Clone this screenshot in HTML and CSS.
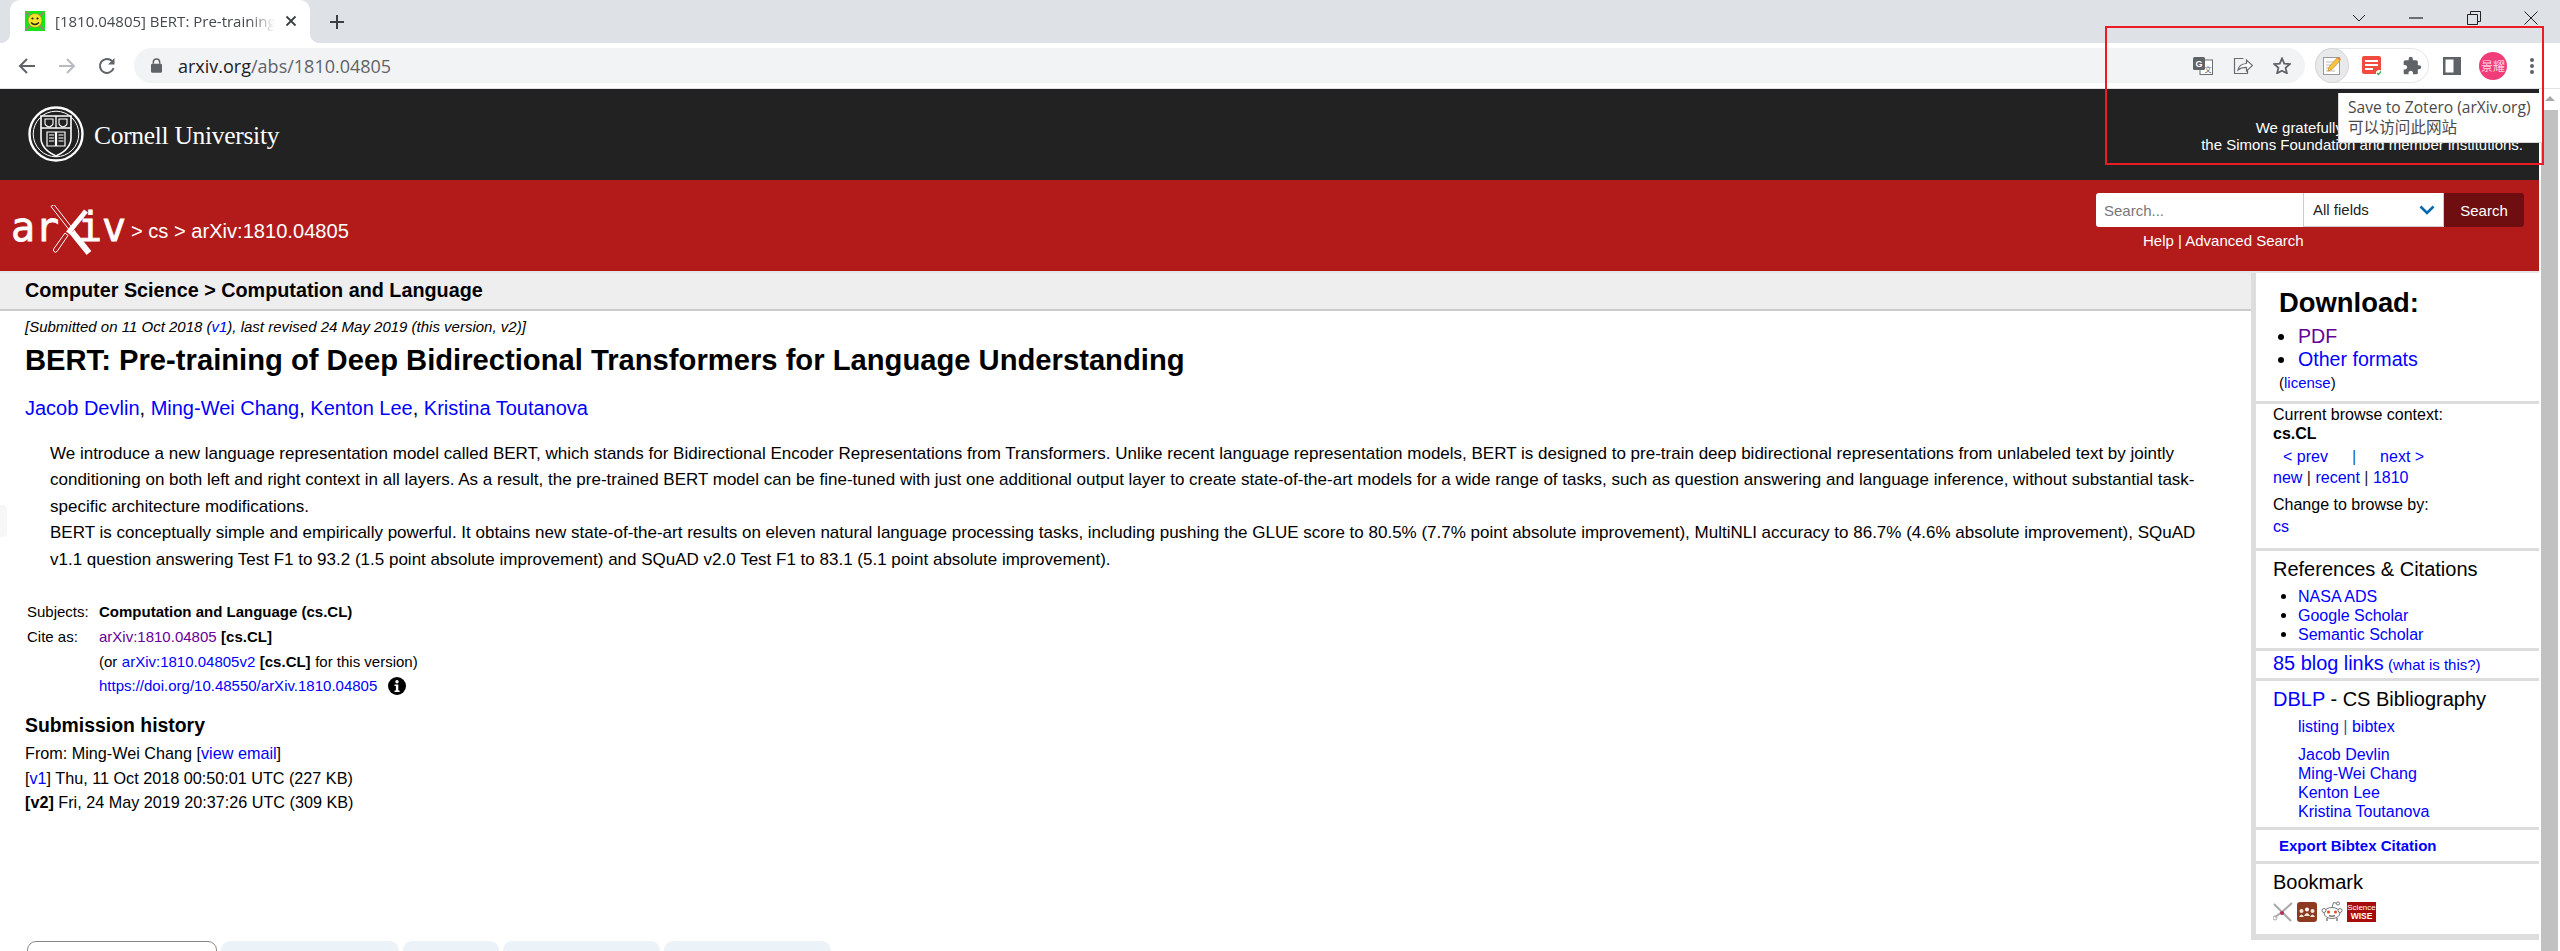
FILE: index.html
```html
<!DOCTYPE html>
<html lang="en">
<head>
<meta charset="utf-8">
<title>[1810.04805] BERT: Pre-training of Deep Bidirectional Transformers</title>
<link rel="stylesheet" href="styles.css">
</head>
<body>
<header class="browser">
  <div class="tabstrip">
    <div class="tab">
      <svg class="favicon" viewBox="0 0 20 20" width="20" height="20"><rect width="20" height="20" fill="#12e812"/><path d="M1 1l5 5M19 1l-5 5M1 19l5-5M19 19l-5-5" stroke="#9a8a78" stroke-width="2"/><circle cx="10" cy="9.5" r="7" fill="#f5e02a" stroke="#8a8a20" stroke-width=".6"/><circle cx="7.5" cy="7.5" r="1.1" fill="#222"/><circle cx="12.5" cy="7.5" r="1.1" fill="#222"/><path d="M6 11.5q4 4 8 0" fill="none" stroke="#222" stroke-width="1.2"/></svg>
      <span class="tab-title">[1810.04805] BERT: Pre-training of Deep</span>
      <svg class="tab-close" viewBox="0 0 12 12" width="12" height="12"><path d="M1.5 1.5l9 9M10.5 1.5l-9 9" stroke="#3c4043" stroke-width="1.8"/></svg>
    </div>
    <svg class="newtab" viewBox="0 0 16 16" width="16" height="16"><path d="M8 1v14M1 8h14" stroke="#3c4043" stroke-width="2"/></svg>
    <div class="winctl">
      <svg viewBox="0 0 14 8" width="14" height="8"><path d="M1 1l6 6 6-6" fill="none" stroke="#222" stroke-width="1"/></svg>
      <svg viewBox="0 0 14 2" width="14" height="2"><path d="M0 1h14" stroke="#222" stroke-width="1.2"/></svg>
      <svg viewBox="0 0 14 14" width="14" height="14"><path d="M.5 3.5h10v10H.5zM3.5 3.5v-3h10v10h-3" fill="none" stroke="#222" stroke-width="1"/></svg>
      <svg viewBox="0 0 14 14" width="14" height="14"><path d="M.5.5l13 13M13.5.5l-13 13" stroke="#222" stroke-width="1"/></svg>
    </div>
  </div>
  <div class="toolbar">
    <svg class="nav" viewBox="0 0 18 18" width="18" height="18"><path d="M17 9H2M9 2L2 9l7 7" fill="none" stroke="#5f6368" stroke-width="2"/></svg>
    <svg class="nav" viewBox="0 0 18 18" width="18" height="18"><path d="M1 9h15M9 2l7 7-7 7" fill="none" stroke="#b8bbbf" stroke-width="2"/></svg>
    <svg class="nav" viewBox="0 0 18 18" width="18" height="18"><path d="M15.6 11.2A7 7 0 1 1 14 4" fill="none" stroke="#5f6368" stroke-width="2"/><path d="M16.5 1v6.5H10z" fill="#5f6368"/></svg>
    <div class="omnibox">
      <svg class="lock" viewBox="0 0 12 16" width="11" height="15"><path d="M2.5 6V4.5a3.5 3.5 0 0 1 7 0V6" fill="none" stroke="#5f6368" stroke-width="1.6"/><rect y="6" width="12" height="10" rx="1.5" fill="#5f6368"/></svg>
      <span class="url"><b>arxiv.org</b>/abs/1810.04805</span>
      <div class="omni-icons">
        <svg viewBox="0 0 20 18" width="20" height="18"><rect x="7" y="3" width="12.5" height="14.5" fill="#fff" stroke="#6a6d70" stroke-width="1"/><rect width="12" height="13" rx="1.5" fill="#5f6368"/><text x="2.6" y="10" class="g-mark">G</text><text x="11.5" y="14.5" class="x-mark">文</text></svg>
        <svg viewBox="0 0 20 18" width="20" height="18"><path d="M10.5 1.5H1.5v15h13V11" fill="none" stroke="#6a6d70" stroke-width="1.2"/><path d="M5 13q1-6 8.5-6.5V3l6 5.5-6 5.5v-3.6Q8 10.300 5 13z" fill="#fff" stroke="#6a6d70" stroke-width="1.2"/></svg>
        <svg viewBox="0 0 20 19" width="18" height="17"><path d="M10 1.500l2.500 5.800 6.300.55-4.800 4.150 1.450 6.150L10 15.300l-5.450 2.850L6 12 1.200 7.850l6.300-.55z" fill="none" stroke="#5f6368" stroke-width="2"/></svg>
      </div>
    </div>
    <div class="ext-pill">
      <span class="ext-active">
        <svg viewBox="0 0 20 20" width="20" height="20"><rect x="1.500" y="1.500" width="16" height="17" fill="#fff" stroke="#9a9a9a"/><path d="M4 6h8M4 9h6M4 12h4M4 15h9" stroke="#bbb" stroke-width="1"/><path d="M6 15l1-4 8-9 3 2.500-8 9z" fill="#f5c242" stroke="#c98a1a" stroke-width=".7"/><path d="M15 2l3 2.500 1-1.500-2.500-2z" fill="#e8834a"/></svg>
      </span>
      <svg class="ext-note" viewBox="0 0 20 20" width="20" height="20"><rect width="19" height="18" rx="2" fill="#f04b3e"/><path d="M3 5h13M3 9h13M3 13h8" stroke="#fff" stroke-width="1.800"/><circle cx="17" cy="17" r="3" fill="#fff"/><path d="M15 17l1.500 1.500 2.500-3" fill="none" stroke="#3fa85a" stroke-width="1.200"/></svg>
      <svg class="ext-puzzle" viewBox="0 0 24 24" width="20" height="20"><path d="M20.500 11H19V7c0-1.100-.9-2-2-2h-4V3.500a2.500 2.500 0 0 0-5 0V5H4c-1.100 0-1.990.9-1.990 2v3.800H3.500c1.490 0 2.700 1.210 2.700 2.700s-1.210 2.700-2.700 2.700H2V20c0 1.100.9 2 2 2h3.800v-1.500c0-1.490 1.210-2.700 2.700-2.700 1.490 0 2.700 1.210 2.700 2.700V22H17c1.100 0 2-.9 2-2v-4h1.500a2.500 2.500 0 0 0 0-5z" fill="#5f6368"/></svg>
    </div>
    <svg class="sidepanel" viewBox="0 0 18 18" width="18" height="18"><path d="M0 0h18v18H0z" fill="#5f6368"/><path d="M2.500 2.500h8v13h-8z" fill="#fff"/></svg>
    <span class="avatar">景耀</span>
    <svg class="menu" viewBox="0 0 4 16" width="4" height="16"><circle cx="2" cy="2" r="2" fill="#5f6368"/><circle cx="2" cy="8" r="2" fill="#5f6368"/><circle cx="2" cy="14" r="2" fill="#5f6368"/></svg>
  </div>
</header>

<div class="viewport">
  <div class="page">
    <div class="cornell">
      <svg class="cu-seal" viewBox="0 0 56 56" width="56" height="56">
        <circle cx="28" cy="28" r="26.500" fill="none" stroke="#fff" stroke-width="2.400"/>
        <circle cx="28" cy="28" r="22.800" fill="none" stroke="#fff" stroke-width="1"/>
        <path d="M13 10h30v22q0 11-15 18q-15-7-15-18z" fill="#222" stroke="#fff" stroke-width="1.600"/>
        <path d="M13 22h30M28 10v12" stroke="#fff" stroke-width="1.300"/>
        <path d="M17 13h8v4.500q0 2-4 3.500q-4-1.500-4-3.500zM31 13h8v4.500q0 2-4 3.500q-4-1.500-4-3.500z" fill="none" stroke="#fff" stroke-width="1.100"/>
        <path d="M19 26h8.500v14H19zM28.500 26H37v14h-8.500z" fill="none" stroke="#fff" stroke-width="1.200"/>
        <path d="M21 29h5M21 32h5M21 35h5M30.500 29h5M30.500 32h5M30.500 35h5" stroke="#fff" stroke-width="1"/>
      </svg>
      <span class="cu-name">Cornell University</span>
      <p class="ack">We gratefully acknowledge support from<br>the Simons Foundation and member institutions.</p>
    </div>
    <div class="redbar">
      <svg class="arxiv-logo" viewBox="0 0 118 52" width="118" height="52">
        <text x="1" y="36" class="logo-text">ar</text>
        <text x="68" y="36" class="logo-text">iv</text>
        <path d="M41 1.500l3-2 21 27-3 2z" fill="#b31b1b" stroke="#fff" stroke-width="1"/>
        <path d="M62 27l17 21" stroke="#fff" stroke-width="6"/>
        <path d="M76 6l-18 22" stroke="#fff" stroke-width="5"/>
        <path d="M55 28l3 2.500-11 16q-1.500 1.500-3 0t0-3z" fill="#b31b1b" stroke="#fff" stroke-width="1"/>
      </svg>
      <span class="crumbs">&gt; cs &gt; arXiv:1810.04805</span>
      <div class="searchbox">
        <div class="searchrow">
          <input class="search-input" type="text" placeholder="Search...">
          <div class="search-field">All fields
            <svg viewBox="0 0 16 10" width="16" height="10"><path d="M1.500 1.500L8 8l6.500-6.500" fill="none" stroke="#0068ac" stroke-width="2.500"/></svg>
          </div>
          <span class="search-btn">Search</span>
        </div>
        <p class="search-help">Help | Advanced Search</p>
      </div>
    </div>
    <div class="content">
      <main class="main">
        <h1 class="breadcrumb">Computer Science &gt; Computation and Language</h1>
        <article class="paper">
          <p class="dateline">[Submitted on 11 Oct 2018 (<a href="#">v1</a>), last revised 24 May 2019 (this version, v2)]</p>
          <h2 class="title">BERT: Pre-training of Deep Bidirectional Transformers for Language Understanding</h2>
          <p class="authors"><a href="#">Jacob Devlin</a>, <a href="#">Ming-Wei Chang</a>, <a href="#">Kenton Lee</a>, <a href="#">Kristina Toutanova</a></p>
          <p class="abstract">We introduce a new language representation model called BERT, which stands for Bidirectional Encoder Representations from Transformers. Unlike recent language representation models, BERT is designed to pre-train deep bidirectional representations from unlabeled text by jointly<br>conditioning on both left and right context in all layers. As a result, the pre-trained BERT model can be fine-tuned with just one additional output layer to create state-of-the-art models for a wide range of tasks, such as question answering and language inference, without substantial task-<br>specific architecture modifications.<br>BERT is conceptually simple and empirically powerful. It obtains new state-of-the-art results on eleven natural language processing tasks, including pushing the GLUE score to 80.5% (7.7% point absolute improvement), MultiNLI accuracy to 86.7% (4.6% absolute improvement), SQuAD<br>v1.1 question answering Test F1 to 93.2 (1.5 point absolute improvement) and SQuAD v2.0 Test F1 to 83.1 (5.1 point absolute improvement).</p>
          <dl class="meta">
            <dt>Subjects:</dt><dd><b>Computation and Language (cs.CL)</b></dd>
            <dt>Cite as:</dt><dd><a class="visited" href="#">arXiv:1810.04805</a> <b>[cs.CL]</b></dd>
            <dt></dt><dd>(or <a href="#">arXiv:1810.04805v2</a> <b>[cs.CL]</b> for this version)</dd>
            <dt></dt><dd><a href="#">https://doi.org/10.48550/arXiv.1810.04805</a>
              <svg class="info" viewBox="0 0 18 18" width="18" height="18"><circle cx="9" cy="9" r="9" fill="#000"/><circle cx="9" cy="4.800" r="1.700" fill="#fff"/><path d="M6.500 7.500h3.800v6h1.300v1.500H6.500v-1.500h1.400V9H6.500z" fill="#fff"/></svg></dd>
          </dl>
          <h3 class="hist-title">Submission history</h3>
          <p class="hist">From: Ming-Wei Chang [<a href="#">view email</a>]<br>[<a href="#">v1</a>] Thu, 11 Oct 2018 00:50:01 UTC (227 KB)<br><b>[v2]</b> Fri, 24 May 2019 20:37:26 UTC (309 KB)</p>
        </article>
        <nav class="bottom-tabs">
          <span class="btab btab-active"></span>
          <span class="btab btab-a"></span>
          <span class="btab btab-b"></span>
          <span class="btab btab-c"></span>
          <span class="btab btab-d"></span>
        </nav>
      </main>
      <aside class="sidebar">
        <section class="box box-download">
          <h2 class="dl-title">Download:</h2>
          <ul class="dl-list">
            <li><a class="visited" href="#">PDF</a></li>
            <li><a href="#">Other formats</a></li>
          </ul>
          <p class="license">(<a href="#">license</a>)</p>
        </section>
        <section class="box box-browse">
          <p class="ctx">Current browse context:</p>
          <p class="ctx-bold">cs.CL</p>
          <p class="prevnext"><a href="#">&lt; prev</a><span class="pipe">|</span><a href="#">next &gt;</a></p>
          <p class="newrec"><a href="#">new</a> | <a href="#">recent</a> | <a href="#">1810</a></p>
          <p class="change">Change to browse by:</p>
          <p class="csline"><a href="#">cs</a></p>
        </section>
        <section class="box box-refs">
          <h3 class="side-h">References &amp; Citations</h3>
          <ul class="ref-list">
            <li><a href="#">NASA ADS</a></li>
            <li><a href="#">Google Scholar</a></li>
            <li><a href="#">Semantic Scholar</a></li>
          </ul>
        </section>
        <section class="box box-blog"><a class="blog" href="#">85 blog links</a> <a class="whatis" href="#">(what is this?)</a></section>
        <section class="box box-dblp">
          <h3 class="side-h"><a href="#">DBLP</a> - CS Bibliography</h3>
          <p class="dblp-links"><a href="#">listing</a> | <a href="#">bibtex</a></p>
          <p class="dblp-names"><a href="#">Jacob Devlin</a><br><a href="#">Ming-Wei Chang</a><br><a href="#">Kenton Lee</a><br><a href="#">Kristina Toutanova</a></p>
        </section>
        <section class="box box-export"><a href="#">Export Bibtex Citation</a></section>
        <section class="box box-bookmark">
          <h3 class="side-h">Bookmark</h3>
          <div class="bm-icons">
            <svg viewBox="0 0 20 20" width="20" height="20"><path d="M1 2l8 8M19 1l-10 9M9 10l9 9M9 10l-7 5" stroke="#a9a9a9" stroke-width="2"/><circle cx="2" cy="16" r="2" fill="none" stroke="#a9a9a9"/><circle cx="9" cy="11" r="2" fill="#b03060"/></svg>
            <svg viewBox="0 0 20 20" width="20" height="20"><rect width="20" height="20" rx="3" fill="#8e3a20"/><circle cx="4.500" cy="9" r="2" fill="#f2e5dc"/><circle cx="10" cy="7.500" r="2" fill="#fff"/><circle cx="15.500" cy="9" r="2" fill="#f2e5dc"/><path d="M2 15q2.500-5 5 0zM7 14q3-6 6 0zM13 15q2.500-5 5 0z" fill="#f2e5dc"/></svg>
            <svg viewBox="0 0 22 22" width="22" height="22"><ellipse cx="11" cy="13" rx="8" ry="5.500" fill="#fff" stroke="#777"/><circle cx="7.500" cy="12" r="1.500" fill="#f0461e"/><circle cx="14.500" cy="12" r="1.500" fill="#f0461e"/><path d="M11 7.500l1.500-5 4 1" fill="none" stroke="#777"/><circle cx="17" cy="3.500" r="1.600" fill="#fff" stroke="#777"/><circle cx="3" cy="10.500" r="2" fill="#fff" stroke="#777"/><circle cx="19" cy="10.500" r="2" fill="#fff" stroke="#777"/><path d="M6 18v3M16 18v3M8 15.500q3 1.500 6 0" fill="none" stroke="#777" stroke-width="1.400"/></svg>
            <span class="sciwise"><span>Science</span><b>WISE</b></span>
          </div>
        </section>
      </aside>
    </div>
  </div>
  <div class="scrollbar">
    <span class="sb-arrow"></span>
    <span class="sb-thumb"></span>
  </div>
</div>

<div class="floating-edge"></div>
<div class="tooltip">Save to Zotero (arXiv.org)<br>可以访问此网站</div>
<div class="annotation"></div>
</body>
</html>
```
FILE: styles.css
```css
* { box-sizing: border-box; }
html, body { margin: 0; height: 951px; overflow: hidden; }
body {
  display: flex;
  flex-direction: column;
  background: #fff;
  color: #000;
  font-family: "Liberation Sans", Arial, sans-serif;
  font-size: 14px;
  position: relative;
}
p, h1, h2, h3, ul, dl, dd { margin: 0; padding: 0; }
a { color: #00f; text-decoration: none; }
a.visited { color: #609; }
svg { display: block; flex: none; }

/* browser chrome */
.browser { flex: none; height: 89px; border-bottom: 1px solid #dfe1e5; }
.tabstrip {
  height: 43px;
  display: flex;
  align-items: center;
  background: #dee1e6;
  padding-left: 10px;
}
.tab {
  position: relative;
  width: 300px;
  height: 43px;
  background: #fff;
  border-radius: 10px 10px 0 0;
  display: flex;
  align-items: center;
  padding: 0 13px 2px 15px;
}
.tab::before, .tab::after {
  content: "";
  position: absolute;
  bottom: 0;
  width: 10px;
  height: 10px;
}
.tab::before { left: -10px; background: radial-gradient(circle at 0 0, transparent 10px, #fff 10.500px); }
.tab::after { right: -10px; background: radial-gradient(circle at 100% 0, transparent 10px, #fff 10.500px); }
.favicon { margin-right: 10px; }
.tab-title {
  flex: 1;
  overflow: hidden;
  white-space: nowrap;
  font: 15px "Open Sans", "Noto Sans", sans-serif;
  color: #45494d;
  -webkit-mask-image: linear-gradient(to right, #000 88%, transparent 100%);
  mask-image: linear-gradient(to right, #000 88%, transparent 100%);
}
.tab-close { margin-left: 10px; }
.newtab { margin-left: 19px; }
.winctl {
  margin-left: auto;
  align-self: flex-start;
  width: 186px;
  height: 36px;
  margin-right: 22px;
  display: flex;
  align-items: center;
  justify-content: space-between;
}
.toolbar {
  height: 45px;
  display: flex;
  align-items: center;
  background: #fff;
  padding: 0 26px 0 18px;
}
.nav { margin-right: 22px; }
.nav:nth-child(3) { margin-right: 18px; }
.omnibox {
  flex: 1;
  height: 35px;
  margin-right: 10px;
  display: flex;
  align-items: center;
  background: #f1f3f4;
  border-radius: 18px;
  padding: 0 14px 0 17px;
}
.url {
  margin-left: 16px;
  font: 18px "Open Sans", "Noto Sans", sans-serif;
  color: #5f6368;
}
.url b { font-weight: 400; color: #202124; }
.omni-icons { margin-left: auto; display: flex; align-items: center; gap: 20px; }
.g-mark { font: bold 9px "Liberation Sans", sans-serif; fill: #fff; }
.x-mark { font: 7px "Noto Sans CJK SC", sans-serif; fill: #5f6368; }
.ext-pill {
  width: 114px;
  height: 35px;
  border: 1px solid #e4e5e7;
  border-radius: 18px;
  display: flex;
  align-items: center;
  flex: none;
}
.ext-active {
  width: 34px;
  height: 35px;
  margin: -1px 0 -1px -1px;
  border-radius: 50%;
  background: #e8e9eb;
  border: 1px solid #d5d6d8;
  display: flex;
  align-items: center;
  justify-content: center;
}
.ext-note { margin-left: 13px; }
.ext-puzzle { margin-left: 20px; }
.sidepanel { margin-left: 14px; }
.avatar {
  width: 28px;
  height: 28px;
  margin-left: 18px;
  border-radius: 50%;
  background: #f03c78;
  color: #ffd0de;
  font: 12px/28px "Noto Sans CJK SC", sans-serif;
  text-align: center;
  flex: none;
}
.menu { margin-left: 23px; }

/* page */
.viewport { flex: 1; min-height: 0; display: flex; }
.page { width: 2539px; display: flex; flex-direction: column; min-height: 0; }
.cornell {
  flex: none;
  height: 91px;
  background: #222;
  color: #fff;
  display: flex;
  align-items: center;
  padding: 0 16px 0 28px;
}
.cu-seal { margin-top: -1px; }
.cu-name {
  margin: 2px 0 0 10px;
  font: 25.500px "Liberation Serif", serif;
  letter-spacing: -.3px;
}
.ack {
  margin-left: auto;
  padding-top: 2px;
  font-size: 15px;
  line-height: 17px;
  text-align: right;
}
.redbar {
  flex: none;
  height: 93px;
  background: #b31b1b;
  border-bottom: 2px solid #e6e6e6;
  color: #fff;
  display: flex;
  align-items: flex-start;
  padding: 0 15px 0 10px;
}
.arxiv-logo { margin-top: 25px; }
.logo-text { font: 40px "DejaVu Sans Mono", monospace; fill: #fff; stroke: #fff; stroke-width: .8px; }
.crumbs { margin: 39px 0 0 3px; font-size: 20.100px; line-height: 24px; }
.searchbox { margin-left: auto; width: 428px; margin-top: 13px; }
.searchrow { display: flex; height: 34px; border-radius: 3px; overflow: hidden; }
.search-input {
  width: 207px;
  border: 0;
  padding: 0 8px;
  font: 15px "Liberation Sans", sans-serif;
  background: #fff;
  outline: 0;
}
.search-input::placeholder { color: #777; opacity: 1; }
.search-field {
  width: 141px;
  background: #fff;
  border-left: 1px solid #ccc;
  border-right: 1px solid #ccc;
  border-bottom: 1px solid #ccc;
  color: #222;
  font-size: 15px;
  padding-left: 9px;
  display: flex;
  align-items: center;
  justify-content: space-between;
  padding-right: 8px;
}
.search-btn {
  width: 80px;
  background: #6f0e10;
  color: #fff;
  font-size: 15px;
  text-align: center;
  line-height: 35px;
}
.search-help { margin: 5px 0 0 47px; font-size: 15px; line-height: 18px; }

.content { flex: 1; min-height: 0; display: flex; align-items: flex-start; }
.main { flex: 1; height: 100%; display: flex; flex-direction: column; min-width: 0; }
.breadcrumb {
  flex: none;
  height: 38px;
  background: #eee;
  border-bottom: 2px solid #ccc;
  padding-left: 25px;
  font-size: 19.800px;
  line-height: 35px;
}
.paper { flex: 1; padding: 6px 25px 0; min-height: 0; white-space: nowrap; }
.dateline { font-size: 15px; font-style: italic; line-height: 20px; }
.title { margin-top: 7px; font-size: 29.200px; line-height: 32px; }
.authors { margin-top: 20px; font-size: 20px; line-height: 24px; }
.abstract { margin: 21px 0 0 25px; font-size: 17px; line-height: 26.400px; }
.meta {
  margin: 26.500px 0 0 2px;
  display: grid;
  grid-template-columns: 72px 1fr;
  grid-auto-rows: 24.700px;
  font-size: 15px;
  align-items: center;
}
.meta dd { display: flex; gap: .3em; align-items: center; }
.info { margin-left: 6px; }
.hist-title { margin-top: 15px; font-size: 19.400px; line-height: 24px; }
.hist { margin-top: 4px; font-size: 16.200px; line-height: 24.500px; }
.bottom-tabs { flex: none; height: 10px; display: flex; gap: 4px; padding-left: 27px; }
.btab { height: 18px; border-radius: 9px 9px 0 0; background: #ebf3f8; }
.btab-active { width: 190px; background: #fff; border: 1px solid #888; }
.btab-a { width: 178px; }
.btab-b { width: 96px; }
.btab-c { width: 157px; }
.btab-d { width: 167px; }

/* sidebar */
.sidebar {
  flex: none;
  width: 288px;
  background: #ddd;
  padding: 0 0 6px 5px;
  display: flex;
  flex-direction: column;
  gap: 3px;
}
.box { background: #fff; padding-left: 17px; line-height: 19px; font-size: 16px; }
.box-download { height: 128px; padding-left: 23px; }
.dl-title { font-size: 27.400px; line-height: 32px; padding-top: 14px; box-sizing: content-box; }
.dl-list { list-style: none; margin-top: 6px; font-size: 19.600px; line-height: 23px; }
.dl-list li, .ref-list li { position: relative; padding-left: 19px; }
.dl-list li::before, .ref-list li::before {
  content: "";
  position: absolute;
  left: -1px;
  top: 9px;
  width: 6px;
  height: 6px;
  border-radius: 50%;
  background: #000;
}
.license { margin-top: 3px; font-size: 15px; line-height: 18px; }
.box-browse { height: 144px; padding-top: 1px; }
.ctx { line-height: 19px; }
.ctx-bold { font-weight: 700; line-height: 19px; }
.prevnext { margin: 2px 0 0 10px; line-height: 23px; }
.pipe { margin: 0 24px; color: #0d5f9e; }
.newrec { line-height: 19px; color: #222; }
.change { margin-top: 8px; line-height: 19px; }
.csline { margin-top: 3px; line-height: 19px; }
.box-refs { height: 97px; }
.side-h { font-weight: 400; font-size: 20px; line-height: 24px; padding-top: 6px; box-sizing: content-box; }
.ref-list { list-style: none; margin: 6px 0 0 8px; line-height: 19px; }
.ref-list li { padding-left: 17px; }
.ref-list li::before { top: 7px; left: 0; width: 5px; height: 5px; }
.box-blog { height: 27px; line-height: 21px; padding-top: 2px; white-space: nowrap; }
.blog { font-size: 19.900px; }
.whatis { font-size: 15px; }
.box-dblp { height: 146px; }
.dblp-links { margin: 6px 0 0 25px; line-height: 19px; color: #0d5f9e; }
.dblp-names { margin: 9px 0 0 25px; line-height: 19px; }
.box-export { height: 31px; padding-left: 23px; font-size: 15px; font-weight: 700; line-height: 31px; }
.box-bookmark { height: 70px; }
.bm-icons { display: flex; align-items: flex-end; gap: 4px; margin-top: 6px; }
.sciwise {
  width: 29px;
  height: 20px;
  background: #a80b0b;
  color: #fff;
  display: flex;
  flex-direction: column;
  align-items: center;
  font: 8px/9px "Liberation Sans", sans-serif;
  padding-top: 1px;
}
.sciwise b { font-size: 8.500px; }

/* scrollbar */
.scrollbar { flex: 1; display: flex; flex-direction: column; align-items: center; padding-left: 2px; padding-right: 2px; }
.sb-arrow {
  margin-top: 7px;
  width: 0;
  height: 0;
  border-left: 5px solid transparent;
  border-right: 5px solid transparent;
  border-bottom: 5px solid #a8a8a8;
}
.sb-thumb { margin-top: 9px; width: 17px; flex: 1; background: #c1c1c1; }

/* overlays */
.floating-edge {
  position: absolute;
  left: 0;
  top: 505px;
  width: 7px;
  height: 32px;
  background: #f7f7f7;
  border-radius: 0 4px 4px 0;
}
.tooltip {
  position: absolute;
  left: 2338px;
  top: 93px;
  width: 205px;
  height: 50px;
  background: #fff;
  border: 1px solid #d8d8d8;
  border-top: 0;
  padding: 4px 0 0 9px;
  color: #4a4a4a;
  font: 15.600px/20px "Open Sans", "Noto Sans CJK SC", sans-serif;
  white-space: nowrap;
}
.annotation {
  position: absolute;
  left: 2105px;
  top: 26px;
  width: 439px;
  height: 139px;
  border: 2px solid #ed1c24;
}
```
